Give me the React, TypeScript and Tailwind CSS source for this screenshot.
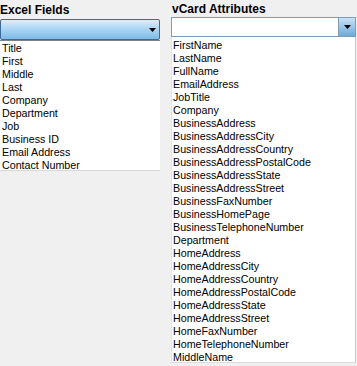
import React from 'react';

const excelFields = [
  'Title',
  'First',
  'Middle',
  'Last',
  'Company',
  'Department',
  'Job',
  'Business ID',
  'Email Address',
  'Contact Number',
];

const vcardAttributes = [
  'FirstName',
  'LastName',
  'FullName',
  'EmailAddress',
  'JobTitle',
  'Company',
  'BusinessAddress',
  'BusinessAddressCity',
  'BusinessAddressCountry',
  'BusinessAddressPostalCode',
  'BusinessAddressState',
  'BusinessAddressStreet',
  'BusinessFaxNumber',
  'BusinessHomePage',
  'BusinessTelephoneNumber',
  'Department',
  'HomeAddress',
  'HomeAddressCity',
  'HomeAddressCountry',
  'HomeAddressPostalCode',
  'HomeAddressState',
  'HomeAddressStreet',
  'HomeFaxNumber',
  'HomeTelephoneNumber',
  'MiddleName',
];

const Arrow = () => (
  <svg width="7" height="4" viewBox="0 0 7 4">
    <path d="M0 0h7L3.5 4z" fill="#000" />
  </svg>
);

const ListItems: React.FC<{ items: string[] }> = ({ items }) => (
  <ul>
    {items.map((item) => (
      <li key={item} className="h-[13px] leading-[13px] whitespace-nowrap">
        {item}
      </li>
    ))}
  </ul>
);

export default function App() {
  return (
    <div className="w-[357px] h-[366px] bg-[#f0f0f0] text-[10.7px] text-black flex gap-[11px] font-['Liberation_Sans',sans-serif]">
      {/* Excel side */}
      <div className="w-[160px] flex flex-col">
        <div className="h-[19px] pt-[3px] font-bold text-[12px] leading-[14px]">Excel Fields</div>
        <div className="h-[21px] rounded-[2px] border border-[#3d6a98] bg-gradient-to-b from-[#dceefc] via-[#a9d4f3] to-[#7dbbe6] flex items-center justify-end pr-[3px]">
          <Arrow />
        </div>
        <div className="h-[131px] bg-white border-t border-[#808080] border-b border-b-[#d8d8d8] pl-[2px] pt-[1px]">
          <ListItems items={excelFields} />
        </div>
      </div>

      {/* vCard side */}
      <div className="w-[185px] flex flex-col">
        <div className="h-[17px] pt-[2px] pl-[1px] font-bold text-[12px] leading-[14px]">vCard Attributes</div>
        <div className="h-[20px] border border-[#7f9db9] bg-white flex justify-end">
          <div className="w-[17px] h-full border-l border-[#7f9db9] bg-gradient-to-b from-[#c9e3f7] to-[#6fa9d8] flex items-center justify-center">
            <Arrow />
          </div>
        </div>
        <div className="h-[326px] bg-white border-l border-[#e2e2e2] border-r border-r-[#c8c8c8] border-b border-b-[#dcdcdc] pl-[1px] pt-[2px]">
          <ListItems items={vcardAttributes} />
        </div>
      </div>
    </div>
  );
}
